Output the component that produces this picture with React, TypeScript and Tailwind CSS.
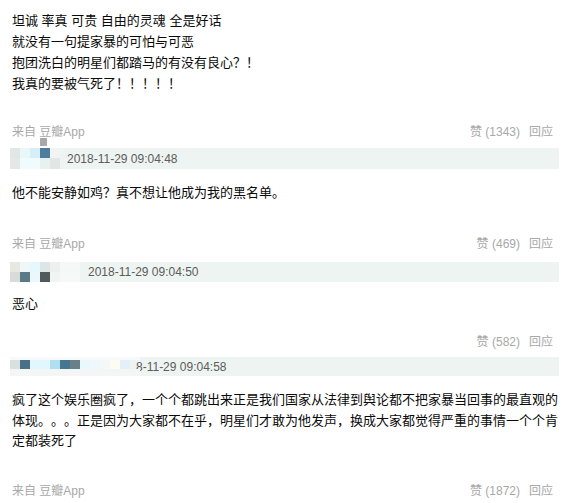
import React from 'react';

type Block = { x: number; y: number; w: number; h: number; c: string };

const FONT = '[font-family:"Liberation_Sans","Noto_Sans_CJK_SC",sans-serif] [text-spacing-trim:space-all]';

// mosaic covering avatar + username
const Mosaic: React.FC<{ blocks: Block[] }> = ({ blocks }) => (
  <>
    {blocks.map((b, i) => (
      <div
        key={i}
        className="absolute"
        style={{ left: b.x, top: b.y, width: b.w, height: b.h, background: b.c }}
      />
    ))}
  </>
);

const Meta: React.FC<{ likes: number; from?: boolean; className?: string }> = ({ likes, from = true, className = '' }) => (
  <div className={`flex items-center justify-between h-[18px] pr-[6px] text-[12px] text-[#a8a8a8] ${className}`}>
    <span className="pl-[2px]">{from ? '来自 豆瓣App' : ''}</span>
    <span className="flex items-center">
      <span>赞 ({likes})</span>
      <span className="ml-[9px]">回应</span>
    </span>
  </div>
);

const Stamp: React.FC<{ time: string; left: number; h: number; blocks: Block[]; className?: string }> = ({ time, left, h, blocks, className = '' }) => (
  <div className={`relative bg-[#eef4f1] flex items-center text-[12px] text-[#5c5c5c] ${className}`} style={{ height: h, paddingLeft: left }}>
    <Mosaic blocks={blocks} />
    <span>{time}</span>
  </div>
);

const App: React.FC = () => {
  return (
    <div className={`w-[582px] h-[503px] bg-white overflow-hidden pl-[10px] pr-[23px] ${FONT}`}>
      <div className="pt-[10px] pl-[2px] text-[13px] leading-[21px] text-[#0a0a0a]">
        <p>坦诚 率真 可贵 自由的灵魂 全是好话</p>
        <p>就没有一句提家暴的可怕与可恶</p>
        <p>抱团洗白的明星们都踏马的有没有良心？！</p>
        <p>我真的要被气死了！！！！！</p>
      </div>

      <Meta likes={1343} className="mt-[29px]" />
      <Stamp
        className="mt-[7px]"
        h={21}
        left={57}
        time="2018-11-29 09:04:48"
        blocks={[
          { x: 0, y: 0, w: 10, h: 10, c: '#e2e6e5' },
          { x: 10, y: 0, w: 10, h: 10, c: '#e8f7fa' },
          { x: 20, y: 0, w: 10, h: 10, c: '#d6eef6' },
          { x: 30, y: 0, w: 10, h: 10, c: '#4d7d9c' },
          { x: 40, y: 0, w: 10, h: 10, c: '#f1f4f4' },
          { x: 0, y: 10, w: 10, h: 11, c: '#e4e8e6' },
          { x: 10, y: 10, w: 20, h: 11, c: '#effbfc' },
          { x: 30, y: 10, w: 10, h: 11, c: '#e8f0f0' },
          { x: 40, y: 10, w: 10, h: 11, c: '#e2e6e4' },
          { x: 30, y: -10, w: 7, h: 8, c: '#a9a9a9' },
        ]}
      />
      <p className="mt-[13px] pl-[2px] text-[13px] leading-[21px] text-[#0a0a0a]">
        他不能安静如鸡？真不想让他成为我的黑名单。
      </p>

      <Meta likes={469} className="mt-[32px]" />
      <Stamp
        className="mt-[9px]"
        h={20}
        left={78}
        time="2018-11-29 09:04:50"
        blocks={[
          { x: 0, y: 0, w: 10, h: 10, c: '#e8e8e0' },
          { x: 10, y: 0, w: 10, h: 10, c: '#eef8fa' },
          { x: 20, y: 0, w: 10, h: 10, c: '#e6f8fc' },
          { x: 30, y: 0, w: 10, h: 10, c: '#dde6e6' },
          { x: 40, y: 0, w: 10, h: 10, c: '#eef0f0' },
          { x: 50, y: 0, w: 20, h: 10, c: '#f6f8f8' },
          { x: 0, y: 10, w: 10, h: 10, c: '#d8dcd8' },
          { x: 10, y: 10, w: 10, h: 10, c: '#5a7a88' },
          { x: 20, y: 10, w: 10, h: 10, c: '#eaf8fc' },
          { x: 30, y: 10, w: 10, h: 10, c: '#505a5a' },
          { x: 40, y: 10, w: 10, h: 10, c: '#f0f4f4' },
          { x: 50, y: 10, w: 20, h: 10, c: '#f7f9f9' },
        ]}
      />
      <p className="mt-[11px] pl-[2px] text-[13px] leading-[21px] text-[#0a0a0a]">恶心</p>

      <Meta likes={582} from={false} className="mt-[19px]" />
      <Stamp
        className="mt-[6px]"
        h={19}
        left={126}
        time="8-11-29 09:04:58"
        blocks={[
          { x: 0, y: 0, w: 130, h: 3, c: '#f6fafa' },
          { x: 0, y: 3, w: 10, h: 9, c: '#d8e0e0' },
          { x: 10, y: 3, w: 10, h: 9, c: '#4a7088' },
          { x: 20, y: 3, w: 20, h: 9, c: '#e0f8fc' },
          { x: 40, y: 3, w: 10, h: 9, c: '#b0e0f0' },
          { x: 50, y: 3, w: 10, h: 9, c: '#457890' },
          { x: 60, y: 3, w: 10, h: 9, c: '#6a8088' },
          { x: 70, y: 3, w: 10, h: 9, c: '#e8f8fc' },
          { x: 80, y: 3, w: 10, h: 9, c: '#eef8fa' },
          { x: 90, y: 3, w: 10, h: 9, c: '#f4f8f8' },
          { x: 100, y: 3, w: 10, h: 9, c: '#fcfcf0' },
          { x: 110, y: 3, w: 10, h: 9, c: '#e4f0f8' },
          { x: 0, y: 12, w: 130, h: 7, c: '#f3f6f4' },
        ]}
      />
      <div className="mt-[14px] pl-[2px] text-[13px] leading-[20.5px] text-[#0a0a0a] whitespace-nowrap">
        <p>疯了这个娱乐圈疯了，一个个都跳出来正是我们国家从法律到舆论都不把家暴当回事的最直观的</p>
        <p>体现。。。正是因为大家都不在乎，明星们才敢为他发声，换成大家都觉得严重的事情一个个肯</p>
        <p>定都装死了</p>
      </div>

      <Meta likes={1872} className="mt-[30px]" />
    </div>
  );
};

export default App;
